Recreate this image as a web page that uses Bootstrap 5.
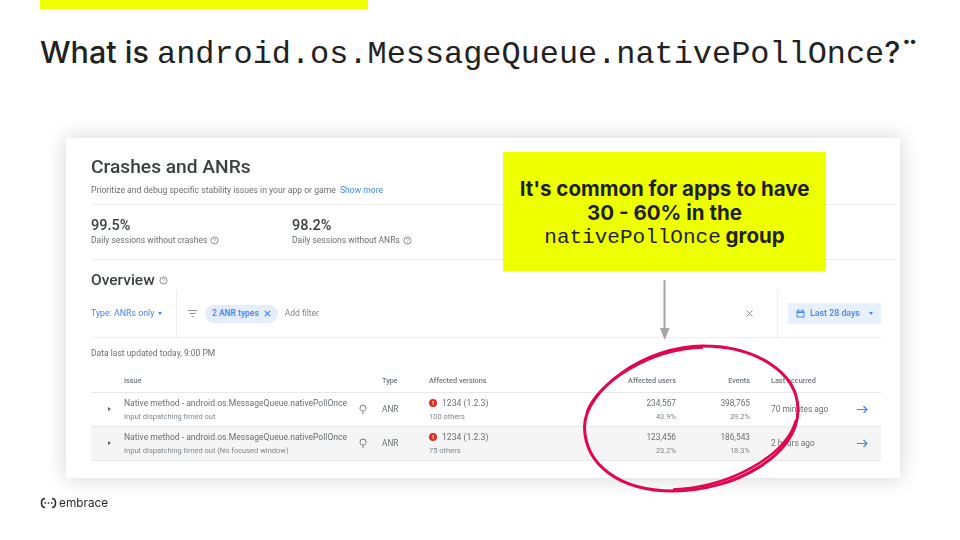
<!DOCTYPE html>
<html lang="en">
<head>
  <title>What is nativePollOnce</title>
  <meta charset="UTF-8" />
  <link href="https://cdn.jsdelivr.net/npm/bootstrap@5.3.0/dist/css/bootstrap.min.css" rel="stylesheet">
  <style>
    html, body { margin: 0; height: 100%; background: #fff; }
    body { font-family: "Roboto", "Liberation Sans", sans-serif; overflow: hidden; }

    .slide { position: relative; width: 960px; height: 540px; padding: 0 40px; }
    .top-bar { width: 328px; height: 9px; background: #eeff00; }
    .slide-title { margin: 23px 0 0; height: 40px; font-family: "Inter", sans-serif; font-size: 30.500px; font-weight: 500; line-height: 40px; color: #222; white-space: nowrap; }
    .slide-title code { font-family: "Liberation Mono", monospace; font-size: 31.900px; font-weight: 400; color: #222; }
    .quote-dots { font-weight: 700; }

    .shot { width: 834px; height: 340px; margin: 66px 0 0 26px; padding: 17px 5px 0 25px; background: #fff; box-shadow: 0 0 20px rgba(0,0,0,.18); color: #6a6e72; font-size: 8px; }
    .shot-inner { filter: blur(.45px); margin-left: -1px; padding-left: 1px; }
    .shot-head { height: 50px; border-bottom: 1px solid #eee; }
    .shot-head h2 { margin: 0; font-size: 19.200px; font-weight: 500; line-height: 23px; color: #3c4043; }
    .shot-head p { margin: 7px 0 0; font-size: 8.600px; line-height: 10px; }
    .blue { color: #4285f4; }
    .stats { height: 55px; padding-top: 13px; border-bottom: 1px solid #eee; }
    .stat { width: 201px; }
    .stat b { display: block; font-size: 14.500px; font-weight: 500; line-height: 16px; color: #3c4043; }
    .stat span { display: flex; align-items: center; gap: 3px; font-size: 8.500px; line-height: 12px; }
    .overview { margin: 11px 0 0; font-size: 15.500px; font-weight: 500; line-height: 18px; color: #3c4043; }
    .filters { width: 790px; height: 48px; margin-top: 1px; border-bottom: 1px solid #eee; font-size: 8.800px; }
    .filter-type { width: 86px; height: 100%; border-right: 1px solid #eee; }
    .filter-main { padding-left: 11px; gap: 8px; }
    .chip { height: 18px; padding: 0 7px; gap: 5px; border-radius: 9px; background: #e3edfb; font-size: 8.500px; font-weight: 500; color: #4285f4; }
    .add-filter { font-size: 8.500px; margin-left: -1px; color: #80868b; }
    .filter-date { width: 104px; height: 100%; padding-left: 10px; border-left: 1px solid #eee; }
    .date-btn { width: 94px; height: 21px; gap: 5px; background: #e8f0fd; color: #4285f4; font-weight: 500; }
    .caret { width: 0; height: 0; border: 2.500px solid transparent; border-top: 3px solid currentColor; border-bottom: 0; display: inline-block; }
    .updated { margin: 10px 0 0; font-size: 8.500px; line-height: 11px; }

    .issues { width: 790px; margin: 7px 0 0; border-collapse: collapse; table-layout: fixed; color: #6a6e72; }
    .issues th { height: 26px; padding: 5px 0 0; font-size: 7.300px; font-weight: 500; color: #70757a; border-bottom: 1px solid #e8e8e8; }
    .issues td { height: 34px; padding: 0; font-size: 8.300px; line-height: 11px; border-bottom: 1px solid #e8e8e8; }
    .issues tr.alt td { background: #f5f5f5; }
    .issues small { display: block; margin-top: 3px; font-size: 7.500px; line-height: 9px; color: #80868b; }
    .issues .issue-title { white-space: nowrap; font-size: 8.550px; }
    .issues .num { text-align: right; }
    .issues .occurred { padding-left: 21px; white-space: nowrap; }
    .bulb-cell { padding-left: 3px !important; }
    .version { gap: 5px; font-size: 8.600px; }
    .dot-err { width: 8px; height: 8px; border-radius: 50%; background: #d93025; color: #fff; font-size: 6px; font-style: normal; line-height: 8px; text-align: center; font-weight: 700; }
    .expander { width: 0; height: 0; border: 2.500px solid transparent; border-left: 3px solid #5f6368; border-right: 0; display: block; margin-left: 17px; }

    .callout { position: absolute; left: 503px; top: 152px; width: 323px; height: 119px; padding-top: 25px; background: #eeff00; font-family: "Inter", sans-serif; font-size: 20.500px; font-weight: 700; line-height: 23.500px; color: #1f1f1f; text-align: center; white-space: nowrap; }
    .callout code { font-family: "Liberation Mono", monospace; font-size: 21px; font-weight: 400; color: #1f1f1f; }
    .overlay { position: absolute; left: 0; top: 0; pointer-events: none; }

    .brand { position: absolute; left: 40px; top: 494px; gap: 2px; font-family: "Inter", sans-serif; font-size: 11.800px; line-height: 18px; color: #2b2b2b; }
  </style>
</head>
<body>
  <div class="slide">
    <div class="top-bar"></div>
    <h1 class="slide-title">What is <code>android.os.MessageQueue.nativePollOnce</code>?<span class="quote-dots">¨</span></h1>

    <div class="shot">
      <div class="shot-inner">
        <div class="shot-head">
          <h2>Crashes and ANRs</h2>
          <p>Prioritize and debug specific stability issues in your app or game&nbsp; <span class="blue">Show more</span></p>
        </div>
        <div class="stats d-flex">
          <div class="stat"><b>99.5%</b><span>Daily sessions without crashes
            <svg width="9" height="9" viewBox="0 0 10 10"><circle cx="5" cy="5" r="4" fill="none" stroke="#80868b"/><path d="M3.800 4a1.200 1.200 0 1 1 1.800 1L5 5.800M5 6.800v.8" fill="none" stroke="#80868b" stroke-width=".8"/></svg></span></div>
          <div class="stat"><b>98.2%</b><span>Daily sessions without ANRs
            <svg width="9" height="9" viewBox="0 0 10 10"><circle cx="5" cy="5" r="4" fill="none" stroke="#80868b"/><path d="M3.800 4a1.200 1.200 0 1 1 1.800 1L5 5.800M5 6.800v.8" fill="none" stroke="#80868b" stroke-width=".8"/></svg></span></div>
        </div>
        <p class="overview">Overview <svg width="9" height="9" viewBox="0 0 10 10"><circle cx="5" cy="5" r="4" fill="none" stroke="#80868b"/><path d="M3.800 4a1.200 1.200 0 1 1 1.800 1L5 5.800M5 6.800v.8" fill="none" stroke="#80868b" stroke-width=".8"/></svg></p>
        <div class="filters d-flex align-items-center">
          <div class="filter-type d-flex align-items-center gap-1 blue">Type: ANRs only <i class="caret"></i></div>
          <div class="filter-main d-flex align-items-center flex-grow-1">
            <svg width="9" height="7" viewBox="0 0 9 7"><path d="M0 .5h9M1.500 3.500h6M3.500 6.500h2" stroke="#8a8e92"/></svg>
            <span class="chip d-flex align-items-center">2 ANR types
              <svg width="7" height="7" viewBox="0 0 7 7"><path d="M.8.8l5.400 5.400M6.200.8L.8 6.200" stroke="#4285f4" stroke-width="1.100"/></svg>
            </span>
            <span class="add-filter">Add filter</span>
            <svg class="ms-auto me-4" width="7" height="7" viewBox="0 0 7 7"><path d="M.5.5l6 6M6.500.5l-6 6" stroke="#80868b" stroke-width=".9"/></svg>
          </div>
          <div class="filter-date d-flex align-items-center">
            <span class="date-btn d-flex align-items-center justify-content-center">
              <svg width="9" height="9" viewBox="0 0 9 9"><path d="M1 2h7v6H1zM1 3.500h7M2.500.5v2M6.500.5v2" fill="none" stroke="#4285f4"/></svg>
              Last 28 days <i class="caret ms-1"></i>
            </span>
          </div>
        </div>
        <p class="updated">Data last updated today, 9:00 PM</p>

        <table class="issues">
          <colgroup><col style="width:33px"><col style="width:232px"><col style="width:26px"><col style="width:47px"><col style="width:140px"><col style="width:107px"><col style="width:74px"><col style="width:93px"><col style="width:38px"></colgroup>
          <thead>
            <tr><th></th><th>Issue</th><th></th><th>Type</th><th>Affected versions</th><th class="num">Affected users</th><th class="num">Events</th><th class="occurred">Last occurred</th><th></th></tr>
          </thead>
          <tbody>
            <tr>
              <td><i class="expander"></i></td>
              <td><span class="issue-title">Native method - android.os.MessageQueue.nativePollOnce</span><small>Input dispatching timed out</small></td>
              <td class="bulb-cell"><svg width="8" height="10" viewBox="0 0 8 10"><path d="M2.500 7C1.500 6 1 5.200 1 4a3 3 0 0 1 6 0c0 1.200-.5 2-1.500 3zM3 9h2" fill="none" stroke="#70757a"/></svg></td>
              <td>ANR</td>
              <td><span class="version d-flex align-items-center"><i class="dot-err">!</i>1234 (1.2.3)</span><small>100 others</small></td>
              <td class="num">234,567<small>43.9%</small></td>
              <td class="num">398,765<small>39.2%</small></td>
              <td class="occurred">70 minutes ago</td>
              <td class="text-center"><svg width="11" height="9" viewBox="0 0 11 9"><path d="M0 4.500h10M6.500 1l3.500 3.500L6.500 8" fill="none" stroke="#4285f4" stroke-width="1.200"/></svg></td>
            </tr>
            <tr class="alt">
              <td><i class="expander"></i></td>
              <td><span class="issue-title">Native method - android.os.MessageQueue.nativePollOnce</span><small>Input dispatching timed out (No focused window)</small></td>
              <td class="bulb-cell"><svg width="8" height="10" viewBox="0 0 8 10"><path d="M2.500 7C1.500 6 1 5.200 1 4a3 3 0 0 1 6 0c0 1.200-.5 2-1.500 3zM3 9h2" fill="none" stroke="#70757a"/></svg></td>
              <td>ANR</td>
              <td><span class="version d-flex align-items-center"><i class="dot-err">!</i>1234 (1.2.3)</span><small>75 others</small></td>
              <td class="num">123,456<small>23.2%</small></td>
              <td class="num">186,543<small>18.3%</small></td>
              <td class="occurred">2 hours ago</td>
              <td class="text-center"><svg width="11" height="9" viewBox="0 0 11 9"><path d="M0 4.500h10M6.500 1l3.500 3.500L6.500 8" fill="none" stroke="#4285f4" stroke-width="1.200"/></svg></td>
            </tr>
          </tbody>
        </table>
      </div>
    </div>

    <div class="callout">It's common for apps to have<br>30 - 60% in the<br><code>nativePollOnce</code> group</div>

    <svg class="overlay" width="960" height="540" viewBox="0 0 960 540">
      <path d="M664.500 280V329" stroke="#a8a4a0" stroke-width="2" fill="none"/>
      <path d="M660 328h9.500l-4.800 12z" fill="#a8a4a0"/>
      <path d="M584.500 427C585 390 645 346 703 346C755 346 798 372 798 410C798 455 735 491 673 491C620 491 585 465 584.500 427Z" fill="none" stroke="#e0064f" stroke-width="3"/>
      <path d="M587 412C598 382 650 349 703 347.500" fill="none" stroke="#e0064f" stroke-width="2.500"/>
      <path d="M796 420C786 456 730 487 673 489.500" fill="none" stroke="#e0064f" stroke-width="2.500"/>
    </svg>

    <div class="brand d-flex align-items-center">
      <svg width="17" height="12" viewBox="0 0 17 12"><path d="M5 1.500C2.500 1.500 1.500 3 1.500 6s1 4.500 3.500 4.500M12 1.500c2.500 0 3.500 1.500 3.500 4.500s-1 4.500-3.500 4.500" fill="none" stroke="#2b2b2b" stroke-width="1.600"/><path d="M4.500 6h8" stroke="#2b2b2b" stroke-width="1.600" stroke-dasharray="1.600 1.600"/></svg>
      embrace
    </div>
  </div>
  <script src="https://cdn.jsdelivr.net/npm/bootstrap@5.3.0/dist/js/bootstrap.bundle.min.js"></script>
</body>
</html>
